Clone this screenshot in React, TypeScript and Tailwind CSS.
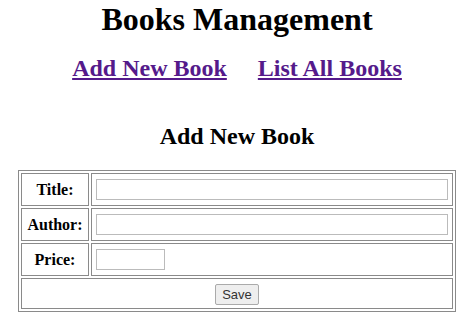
export default function App() {
  return (
    <div className="min-h-screen bg-white text-black" style={{ fontFamily: '"Liberation Serif", "Times New Roman", serif' }}>
      <h1 className="pt-[1px] text-center text-[32px] font-bold leading-[36px]">Books Management</h1>
      <nav className="mt-[17px] flex justify-center gap-[31px] text-[24px] font-bold leading-[28px]">
        <a href="#" className="text-[#551a8b] underline">Add New Book</a>
        <a href="#" className="text-[#551a8b] underline">List All Books</a>
      </nav>
      <h2 className="mt-[40px] text-center text-[24px] font-bold leading-[28px]">Add New Book</h2>
      <div className="mt-[20px] px-[18px]">
        <table className="w-full border-separate border-spacing-[2px] border border-[#8a8a8a] text-[16px] font-bold">
          <tbody>
            <tr>
              <td className="h-[33px] w-[68px] border border-[#8a8a8a] text-center">Title:</td>
              <td className="border border-[#8a8a8a] px-[4px]">
                <input type="text" className="block h-[21px] w-full border border-[#bbb] bg-white" />
              </td>
            </tr>
            <tr>
              <td className="h-[33px] border border-[#8a8a8a] text-center">Author:</td>
              <td className="border border-[#8a8a8a] px-[4px]">
                <input type="text" className="block h-[21px] w-full border border-[#bbb] bg-white" />
              </td>
            </tr>
            <tr>
              <td className="h-[33px] border border-[#8a8a8a] text-center">Price:</td>
              <td className="border border-[#8a8a8a] px-[4px]">
                <input type="text" className="block h-[21px] w-[69px] border border-[#bbb] bg-white" />
              </td>
            </tr>
            <tr>
              <td colSpan={2} className="h-[31px] border border-[#8a8a8a] text-center">
                <button
                  type="button"
                  className="h-[21px] rounded-[2px] border border-[#aaa] bg-[#eee] px-[6px] text-[13px] font-normal leading-[19px] text-[#333]"
                  style={{ fontFamily: '"Liberation Sans", Arial, sans-serif' }}
                >
                  Save
                </button>
              </td>
            </tr>
          </tbody>
        </table>
      </div>
    </div>
  );
}
